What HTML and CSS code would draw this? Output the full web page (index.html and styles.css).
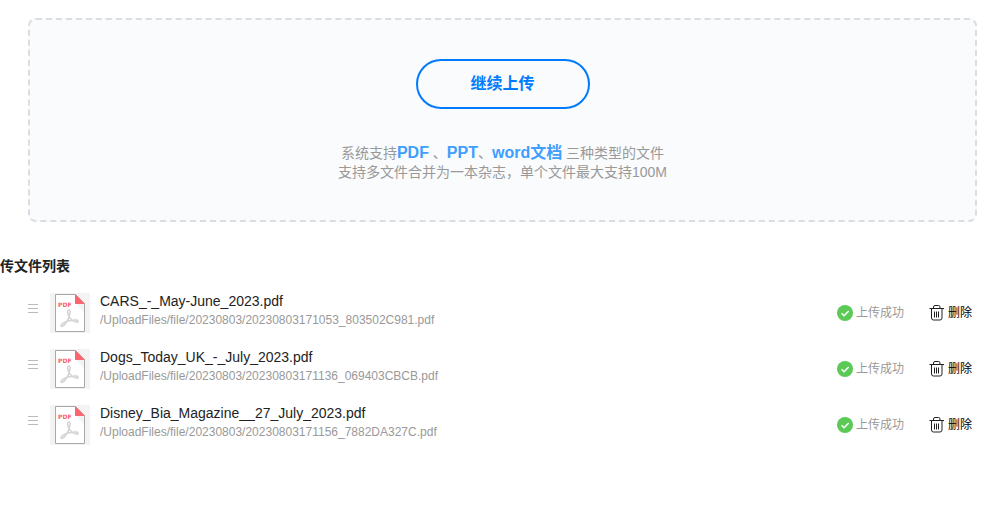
FILE: index.html
```
<!DOCTYPE html>
<html lang="zh-CN">
<head>
    <meta charset="UTF-8">
    <meta name="viewport" content="width=device-width, initial-scale=1.0">
    <title>上传文件</title>
    <link rel="stylesheet" href="styles.css">
</head>
<body>
    <!-- shared icons -->
    <svg class="sprite" aria-hidden="true">
        <symbol id="icon-pdf" viewBox="0 0 40 40">
            <path d="M5.500 1.500h20l9 9v28h-29z" fill="#fff" stroke="#aca5a9"/>
            <path d="M26 11h8v8z" fill="#f3f3f4"/>
            <path d="M25 1l10 10H25z" fill="#fb6670"/>
            <text x="8" y="14" class="pdf-text">PDF</text>
            <path d="M18 17.500c2-1.600 2.500 1.500 1.600 4.500-1.200 4.500-4.600 10.500-7.300 11.300-1.800.3-1.600-1.700.5-3 3.500-2 10-3.700 13.700-3.200 2.500.5 1.800 2.400-.4 2-3.100-.6-6.900-4-7.900-7-.5-2-.9-4-.2-4.600z" fill="none" stroke="#d3d3d5" stroke-width="1.500"/>
        </symbol>
        <symbol id="icon-ok" viewBox="0 0 16 16">
            <circle cx="8" cy="8" r="8" fill="#5bc955"/>
            <path d="M4.500 8.200l2.500 2.500 4.700-4.800" fill="none" stroke="#fff" stroke-width="1.500"/>
        </symbol>
        <symbol id="icon-trash" viewBox="0 0 16 16">
            <path d="M0.500 3.500h14.500M4.500 3.500v-1.500q0-1.500 1.500-1.500h3.500q1.500 0 1.500 1.500v1.500M2.500 3.500v9.500q0 2 2 2h6.500q2 0 2-2v-9.500M5.500 6.500v6M7.500 6.500v6M9.500 6.500v6" fill="none" stroke="#222"/>
        </symbol>
    </svg>

    <div class="upload-box">
        <button type="button" class="upload-btn">继续上传</button>
        <p class="upload-tip">
            系统支持<b>PDF</b> 、<b>PPT</b>、<b>word文档</b> 三种类型的文件<br>
            支持多文件合并为一本杂志，单个文件最大支持100M
        </p>
    </div>

    <h2 class="list-title">传文件列表</h2>

    <ul class="file-list">
        <li class="file-item">
            <span class="drag"></span>
            <svg class="file-icon" aria-hidden="true"><use href="#icon-pdf"/></svg>
            <div class="file-info">
                <div class="file-name">CARS_-_May-June_2023.pdf</div>
                <div class="file-path">/UploadFiles/file/20230803/20230803171053_803502C981.pdf</div>
            </div>
            <span class="status"><svg class="icon" aria-hidden="true"><use href="#icon-ok"/></svg>上传成功</span>
            <button type="button" class="delete-btn"><svg class="icon" aria-hidden="true"><use href="#icon-trash"/></svg>删除</button>
        </li>
        <li class="file-item">
            <span class="drag"></span>
            <svg class="file-icon" aria-hidden="true"><use href="#icon-pdf"/></svg>
            <div class="file-info">
                <div class="file-name">Dogs_Today_UK_-_July_2023.pdf</div>
                <div class="file-path">/UploadFiles/file/20230803/20230803171136_069403CBCB.pdf</div>
            </div>
            <span class="status"><svg class="icon" aria-hidden="true"><use href="#icon-ok"/></svg>上传成功</span>
            <button type="button" class="delete-btn"><svg class="icon" aria-hidden="true"><use href="#icon-trash"/></svg>删除</button>
        </li>
        <li class="file-item">
            <span class="drag"></span>
            <svg class="file-icon" aria-hidden="true"><use href="#icon-pdf"/></svg>
            <div class="file-info">
                <div class="file-name">Disney_Bia_Magazine__27_July_2023.pdf</div>
                <div class="file-path">/UploadFiles/file/20230803/20230803171156_7882DA327C.pdf</div>
            </div>
            <span class="status"><svg class="icon" aria-hidden="true"><use href="#icon-ok"/></svg>上传成功</span>
            <button type="button" class="delete-btn"><svg class="icon" aria-hidden="true"><use href="#icon-trash"/></svg>删除</button>
        </li>
    </ul>
</body>
</html>
```

FILE: styles.css
```
* {
    box-sizing: border-box;
}
body {
    margin: 0;
    background-color: #fff;
    color: #222;
    font-family: "Liberation Sans", Arial, "Noto Sans CJK SC", sans-serif;
    font-size: 14px;
}
button {
    font-family: inherit;
    cursor: pointer;
}
.sprite {
    display: none;
}
.upload-box {
    margin: 18px 27px 0 28px;
    padding: 39px 20px 38px;
    border: 2px dashed #dcdde3;
    border-radius: 8px;
    background-color: #fafbfd;
    text-align: center;
}
.upload-btn {
    display: block;
    width: 174px;
    height: 50px;
    margin: 0 auto;
    padding: 0 0 4px;
    border: 2px solid #007aff;
    border-radius: 25px;
    background-color: transparent;
    color: #007aff;
    font-size: 16px;
    font-weight: bold;
}
.upload-tip {
    margin: 34px 0 0;
    color: #999;
    line-height: 19px;
}
.upload-tip b {
    color: #409eff;
    font-size: 16px;
}
.list-title {
    margin: 34px 0 0;
    font-size: 14px;
    line-height: 20px;
}
.file-list {
    display: flex;
    flex-direction: column;
    gap: 16px;
    margin: 17px 0 0;
    padding: 0 32px 0 28px;
    list-style: none;
}
.file-item {
    display: flex;
    align-items: center;
    height: 40px;
}
.drag {
    width: 10px;
    height: 9px;
    margin-bottom: 10px;
    background: linear-gradient(#bbb, #bbb) center / 100% 1px no-repeat;
    border-top: 1px solid #bbb;
    border-bottom: 1px solid #bbb;
}
.file-icon {
    width: 40px;
    height: 40px;
    margin: 0 10px 0 12px;
    background-color: #f3f3f4;
}
.pdf-text {
    fill: #f5606c;
    font-family: "DejaVu Sans", sans-serif;
    font-size: 6px;
    font-weight: bold;
}
.file-info {
    flex: 1;
    align-self: flex-start;
}
.file-name {
    line-height: 16px;
}
.file-path {
    color: #999;
    font-size: 12px;
    line-height: 22px;
}
.status,
.delete-btn {
    display: flex;
    align-items: center;
    gap: 3px;
    font-size: 12px;
    line-height: 16px;
}
.status {
    color: #999;
}
.delete-btn {
    margin-left: 25px;
    padding: 0;
    border: none;
    background: none;
    color: #000;
}
.icon {
    width: 16px;
    height: 16px;
}
```
